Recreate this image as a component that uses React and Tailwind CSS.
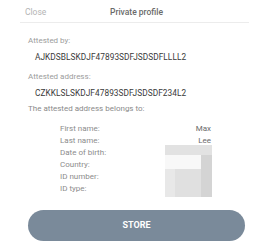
export default function App() {
  const rows = [
    ["First name:", "Max"],
    ["Last name:", "Lee"],
    ["Date of birth:", ""],
    ["Country:", ""],
    ["ID number:", ""],
    ["ID type:", ""],
  ];
  return (
    <div className="w-[269px] h-[242px] bg-white overflow-hidden flex flex-col" style={{ fontFamily: "Roboto, 'Liberation Sans', sans-serif" }}>
      <div className="h-[23px] mx-[20px] pl-[5px] pt-[1px] flex items-center border-b border-[#ececec] text-[8.5px] leading-[10px]">
        <span className="w-[85px] text-[#b4b4b4]">Close</span>
        <span className="font-medium text-[#6a6a6a]">Private profile</span>
      </div>
      <div className="pl-[28px] pt-[13px] text-[8px] leading-[10px] flex flex-col">
        <div className="text-[#9c9c9c]">Attested by:</div>
        <div className="pl-[7px] mt-[6px] text-[8.3px] text-[#3a3a3a] tracking-[0.05px]">AJKDSBLSKDJF47893SDFJSDSDFLLLL2</div>
        <div className="mt-[10px] text-[#9c9c9c]">Attested address:</div>
        <div className="pl-[7px] mt-[6px] text-[8.3px] text-[#3a3a3a] tracking-[0.05px]">CZKKLSLSKDJF47893SDFJSDSDF234L2</div>
        <div className="mt-[6px] text-[#8a8a8a]">The attested address belongs to:</div>
      </div>
      <div className="relative ml-[60px] w-[151px] mt-[9px] text-[8px]">
        {rows.map(([k, v]) => (
          <div key={k} className="flex justify-between h-[12px] leading-[12px]">
            <span className="text-[#8c8c8c]">{k}</span>
            <span className="text-[#6a6a6a]">{v}</span>
          </div>
        ))}
        <div className="absolute left-[105px] top-[22px] grid grid-cols-[10px_26px_11px] grid-rows-[10px_14px_28px]">
          <div className="col-span-3 bg-[#e2e2e2]" />
          <div className="col-span-2 bg-[#f8f8f8]" />
          <div className="row-span-2 bg-[#d4d4d4]" />
          <div className="bg-[#e8e8e8]" />
          <div className="bg-[#e0e0e0]" />
        </div>
      </div>
      <div className="mx-[28px] mt-[15px]">
        <div className="h-[31px] w-[217px] rounded-full bg-[#7a8a9a] flex items-center justify-center text-white text-[9px] font-bold">STORE</div>
      </div>
    </div>
  );
}
